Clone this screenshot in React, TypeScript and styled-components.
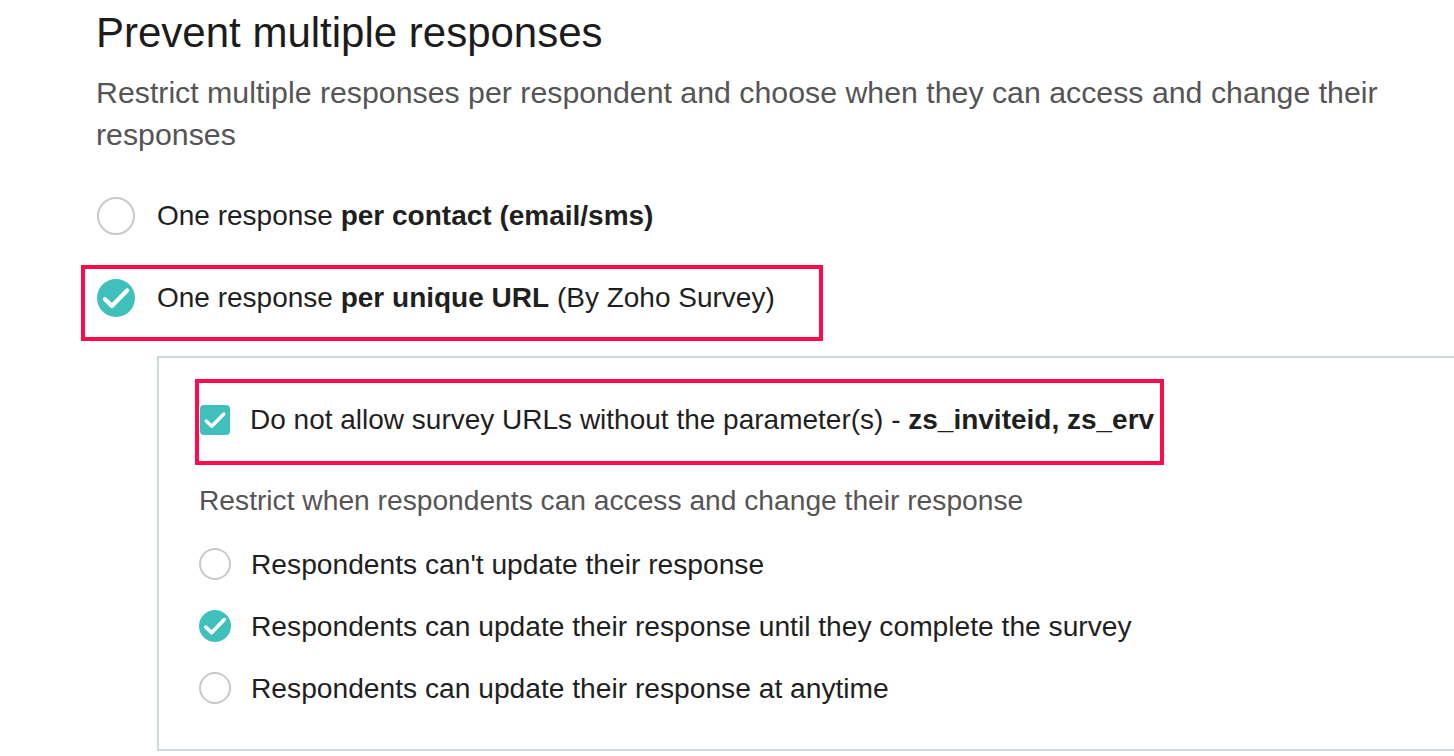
import styled, { createGlobalStyle } from "styled-components";

const GlobalStyle = createGlobalStyle`
  html, body {
    margin: 0;
    padding: 0;
    background: #ffffff;
    overflow: hidden;
  }

  body {
    font-family: "Liberation Sans", Arial, Helvetica, sans-serif;
    color: #1f1f1f;
  }
`;

const TEAL = "#40c0bc";
const HIGHLIGHT = "#ff0a4b";

const StyledPage = styled.main`
  padding: 9px 0 0 96px;
  width: 1454px;
  height: 756px;
  box-sizing: border-box;
`;

const StyledTitle = styled.h1`
  margin: 0;
  font-size: 42px;
  line-height: 48px;
  font-weight: 400;
  color: #1c1c1c;
`;

const StyledDescription = styled.p`
  margin: 15px 0 0;
  max-width: 1320px;
  font-size: 30.3px;
  line-height: 42px;
  color: #555555;
`;

const StyledOption = styled.label<{ $small?: boolean }>`
  display: flex;
  align-items: center;
  gap: ${({ $small }) => ($small ? "20px" : "22px")};
  height: 40px;
  font-size: 28px;
  color: #1f1f1f;
  cursor: pointer;

  b {
    font-weight: 700;
  }
`;

const StyledFirstOption = styled.div`
  margin-top: 40px;
  padding-left: 1px;
`;

// the pink annotation boxes from the screenshot
const StyledHighlight = styled.div<{ $inset: string }>`
  display: inline-block;
  border: 4px solid ${HIGHLIGHT};
  padding: ${({ $inset }) => $inset};
`;

const StyledUrlHighlight = styled(StyledHighlight)`
  margin: 29px 0 0 -15px;
`;

const StyledCheckHighlight = styled(StyledHighlight)`
  margin-left: -4px;
`;

const StyledPanel = styled.section`
  margin: 15px 0 0 61px;
  width: 1310px;
  border: 2px solid #cddbde;
  padding: 21px 0 41px 40px;
  box-sizing: border-box;
`;

const StyledSubTitle = styled.p`
  margin: 17px 0 0;
  font-size: 28.2px;
  line-height: 36px;
  color: #555555;
`;

const StyledSubOptions = styled.div`
  display: flex;
  flex-direction: column;
  gap: 22px;
  margin-top: 26px;

  label {
    font-size: 28.2px;
  }
`;

const StyledRadio = styled.span<{ $checked?: boolean; $size: number }>`
  flex: none;
  width: ${({ $size }) => $size}px;
  height: ${({ $size }) => $size}px;
  border-radius: 50%;
  box-sizing: border-box;
  display: flex;
  align-items: center;
  justify-content: center;
  background: ${({ $checked }) => ($checked ? TEAL : "#ffffff")};
  border: ${({ $checked }) => ($checked ? "none" : "2px solid #c9c9c9")};
`;

const StyledCheckbox = styled.span`
  flex: none;
  width: 30px;
  height: 30px;
  border-radius: 4px;
  background: ${TEAL};
  display: flex;
  align-items: center;
  justify-content: center;
`;

function Tick({ size }: { size: number }) {
  return (
    <svg width={size} height={size} viewBox="0 0 24 24" fill="none">
      <path
        d="M5 12.8l4.4 4.2L19 7.2"
        stroke="#ffffff"
        strokeWidth="2.7"
        strokeLinecap="round"
        strokeLinejoin="round"
      />
    </svg>
  );
}

interface RadioProps {
  checked?: boolean;
  size: number;
}

function Radio({ checked, size }: RadioProps) {
  return (
    <StyledRadio $checked={checked} $size={size}>
      {checked && <Tick size={size} />}
    </StyledRadio>
  );
}

const subOptions = [
  { id: 1, text: "Respondents can't update their response", checked: false },
  {
    id: 2,
    text: "Respondents can update their response until they complete the survey",
    checked: true,
  },
  { id: 3, text: "Respondents can update their response at anytime", checked: false },
];

function App() {
  return (
    <>
      <GlobalStyle />
      <StyledPage>
        <StyledTitle>Prevent multiple responses</StyledTitle>
        <StyledDescription>
          Restrict multiple responses per respondent and choose when they can access and change
          their responses
        </StyledDescription>

        <StyledFirstOption>
          <StyledOption>
            <Radio size={38} />
            <span>
              One response <b>per contact (email/sms)</b>
            </span>
          </StyledOption>
        </StyledFirstOption>

        <StyledUrlHighlight $inset="9px 44px 19px 12px">
          <StyledOption>
            <Radio size={38} checked />
            <span>
              One response <b>per unique URL</b> (By Zoho Survey)
            </span>
          </StyledOption>
        </StyledUrlHighlight>

        <StyledPanel>
          <StyledCheckHighlight $inset="17px 6px 21px 1px">
            <StyledOption $small>
              <StyledCheckbox>
                <Tick size={30} />
              </StyledCheckbox>
              <span>
                Do not allow survey URLs without the parameter(s) - <b>zs_inviteid, zs_erv</b>
              </span>
            </StyledOption>
          </StyledCheckHighlight>

          <StyledSubTitle>Restrict when respondents can access and change their response</StyledSubTitle>

          <StyledSubOptions>
            {subOptions.map((option) => (
              <StyledOption $small key={option.id}>
                <Radio size={32} checked={option.checked} />
                <span>{option.text}</span>
              </StyledOption>
            ))}
          </StyledSubOptions>
        </StyledPanel>
      </StyledPage>
    </>
  );
}

export default App;
